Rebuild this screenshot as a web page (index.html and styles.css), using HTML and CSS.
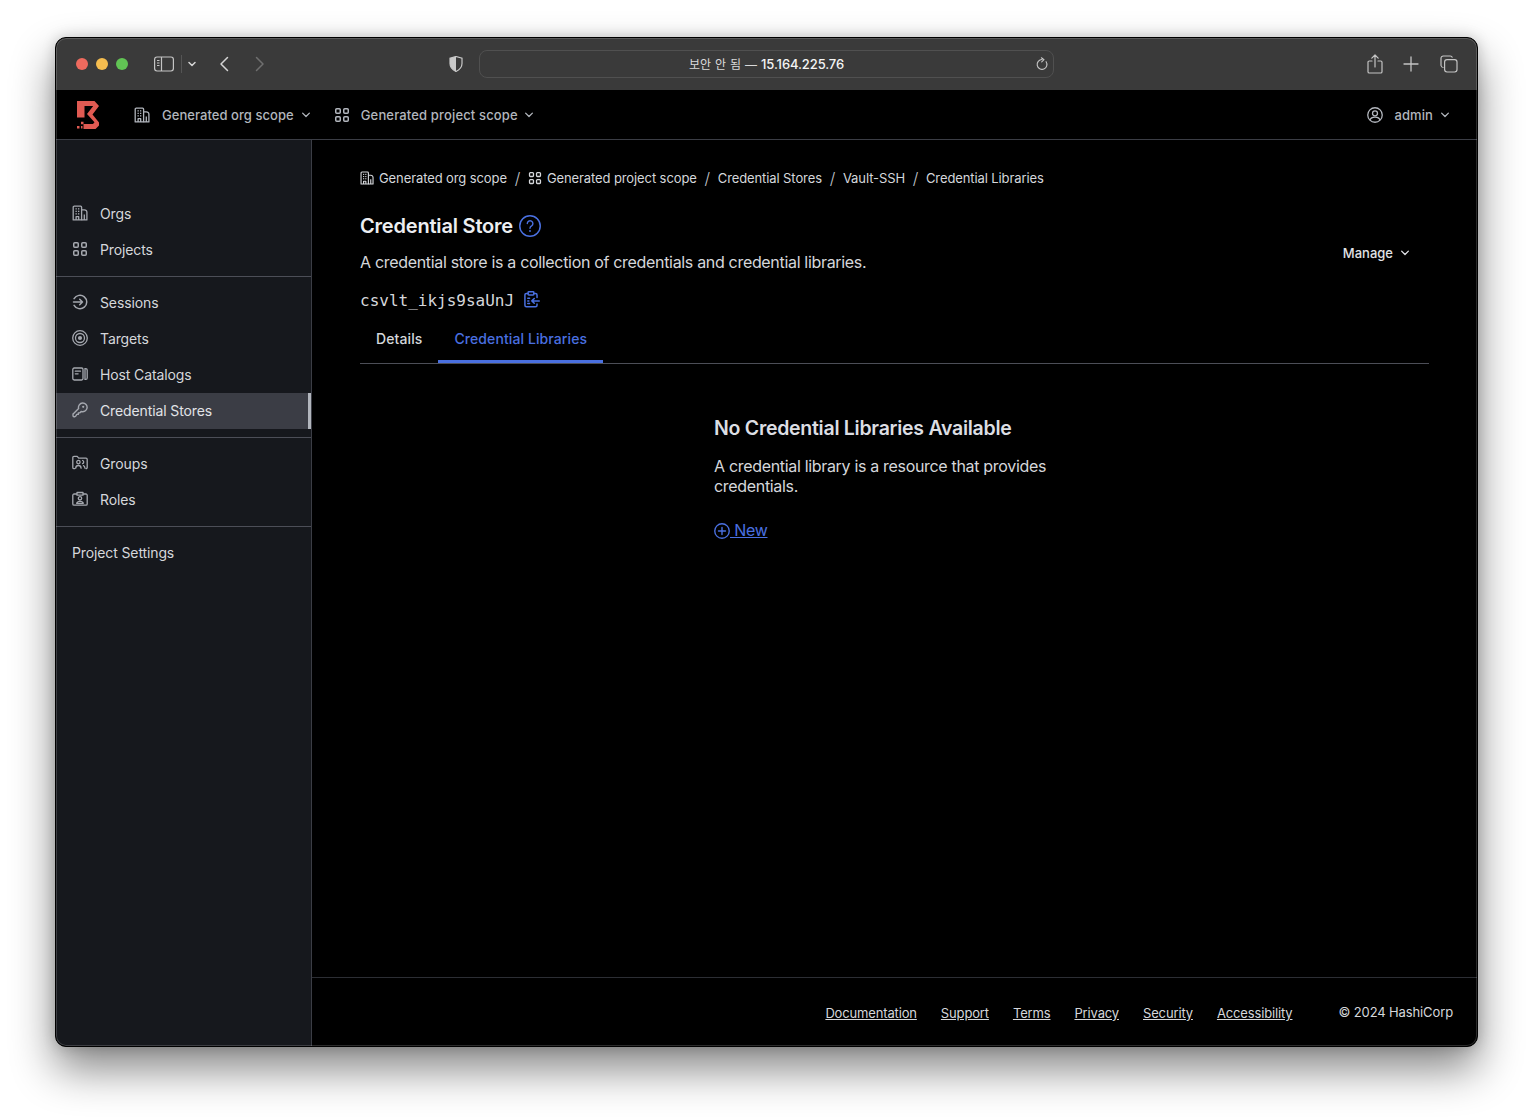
FILE: index.html
```html
<!DOCTYPE html>
<html lang="en">
<head>
<meta charset="utf-8">
<title>Credential Libraries</title>
<link rel="stylesheet" href="styles.css">
</head>
<body>
<svg class="sprite" aria-hidden="true">
  <symbol id="i-org" viewBox="0 0 16 16"><g fill="none" stroke="currentColor" stroke-width="1.300" stroke-linejoin="round"><path d="M1.200 14.900V2.200a1 1 0 0 1 1-1h6.400a1 1 0 0 1 1 1v12.700H1.200z"/><path d="M4.100 14.900v-3.200h2.600v3.200"/><path d="M9.600 4.800h2.800a2.500 2.500 0 0 1 2.500 2.500v7.600H9.600"/><path d="M12.300 14.900V9.500"/></g><g fill="currentColor"><rect x="3.500" y="3.200" width="1.300" height="1.300"/><rect x="6" y="3.200" width="1.300" height="1.300"/><rect x="3.500" y="5.700" width="1.300" height="1.300"/><rect x="6" y="5.700" width="1.300" height="1.300"/><rect x="3.500" y="8.200" width="1.300" height="1.300"/><rect x="6" y="8.200" width="1.300" height="1.300"/></g></symbol>
  <symbol id="i-grid" viewBox="0 0 16 16"><g fill="none" stroke="currentColor" stroke-width="1.500"><rect x="1.750" y="1.750" width="4.500" height="4.500" rx="1"/><rect x="9.750" y="1.750" width="4.500" height="4.500" rx="1"/><rect x="1.750" y="9.750" width="4.500" height="4.500" rx="1"/><rect x="9.750" y="9.750" width="4.500" height="4.500" rx="1"/></g></symbol>
  <symbol id="i-chev" viewBox="0 0 16 16"><path d="M3.500 5.500 8 10l4.500-4.500" fill="none" stroke="currentColor" stroke-width="1.700" stroke-linecap="round" stroke-linejoin="round"/></symbol>
  <symbol id="i-user" viewBox="0 0 16 16"><g fill="none" stroke="currentColor" stroke-width="1.300"><circle cx="8" cy="8" r="7.250"/><circle cx="8" cy="6.300" r="2.500"/><path d="M2.900 13.100c.6-2 2.300-3 5.100-3s4.500 1 5.100 3"/></g></symbol>
  <symbol id="i-sessions" viewBox="0 0 16 16"><g fill="none" stroke="currentColor" stroke-width="1.500" stroke-linecap="round" stroke-linejoin="round"><path d="M2.100 4.700A6.750 6.750 0 1 1 2.100 11.300"/><path d="M1.500 8h9M7.700 5.200 10.500 8l-2.800 2.800"/></g></symbol>
  <symbol id="i-target" viewBox="0 0 16 16"><g fill="none" stroke="currentColor" stroke-width="1.300"><circle cx="8" cy="8" r="7.300"/><circle cx="8" cy="8" r="4.500"/></g><circle cx="8" cy="8" r="2.100" fill="currentColor"/></symbol>
  <symbol id="i-host" viewBox="0 0 16 16"><g fill="none" stroke="currentColor" stroke-width="1.300" stroke-linecap="round"><rect x=".8" y="2" width="10.200" height="12" rx="1.400"/><path d="M3.300 5.200h5.200M3.300 7.800h2.800"/><path d="M13 2.600h.7c.9 0 1.500.6 1.500 1.500v7.800c0 .9-.6 1.500-1.500 1.500H13z"/></g></symbol>
  <symbol id="i-key" viewBox="0 0 16 16"><path d="M10.600 1a4.400 4.400 0 1 1-1.500 8.500l-1.400 1.400H6.300v1.500H4.800l-1.100 1.800c-.2.300-.5.500-.9.500H2a1 1 0 0 1-1-1v-1.100c0-.4.100-.7.400-.9l5.200-5.200A4.400 4.400 0 0 1 10.600 1z" fill="none" stroke="currentColor" stroke-width="1.400" stroke-linejoin="round"/><circle cx="11.200" cy="4.800" r="1.100" fill="currentColor"/></symbol>
  <symbol id="i-groups" viewBox="0 0 16 16"><g fill="none" stroke="currentColor" stroke-width="1.300" stroke-linecap="round" stroke-linejoin="round"><path d="M2.800 13.600H2A1.200 1.200 0 0 1 .8 12.400V2.600A1.200 1.200 0 0 1 2 1.400h3.200l1.500 1.800h7.300a1.200 1.200 0 0 1 1.200 1.200v8a1.200 1.200 0 0 1-1.200 1.200"/><circle cx="6.400" cy="7.100" r="1.700"/><path d="M3.700 13.200c.1-1.700 1.100-2.700 2.700-2.700s2.600 1 2.700 2.700"/><path d="M10.600 5.500a1.700 1.700 0 0 1 0 3.200M11.500 10.600c.9.400 1.400 1.300 1.500 2.600"/></g></symbol>
  <symbol id="i-roles" viewBox="0 0 16 16"><g fill="none" stroke="currentColor" stroke-width="1.300" stroke-linejoin="round"><path d="M5 3H2.100A1.300 1.300 0 0 0 .8 4.300v8.600c0 .7.600 1.300 1.300 1.300h11.800c.7 0 1.300-.6 1.300-1.300V4.300c0-.7-.6-1.300-1.300-1.300H11"/><path d="M5 4.200V1.500h6v2.700z"/><circle cx="8" cy="7.300" r="1.700"/><path d="M4.700 12.400c.2-1.300 1.300-2 3.300-2s3.100.7 3.300 2z"/></g></symbol>
  <symbol id="i-copy" viewBox="0 0 16 16"><g fill="none" stroke="currentColor" stroke-width="1.400" stroke-linecap="round" stroke-linejoin="round"><path d="M4.800 2.300H3.200c-.8 0-1.400.6-1.400 1.400v9.800c0 .8.600 1.400 1.400 1.400h8.600c.8 0 1.400-.6 1.400-1.400v-1.300M13.200 6.200V3.700c0-.8-.6-1.400-1.400-1.400h-1.600"/><rect x="4.800" y=".8" width="5.400" height="3" rx=".7"/><path d="M15.300 9.300H8.300M10.600 7l-2.300 2.300 2.300 2.300M4.500 6.800h1.700M4.500 9.300h1M4.500 11.800h1.700"/></g></symbol>
  <symbol id="i-help" viewBox="0 0 22 22"><g fill="none" stroke="currentColor" stroke-linecap="round"><circle cx="11" cy="11" r="10.250" stroke-width="1.500"/><path d="M8.300 8.500a2.800 2.800 0 1 1 4.300 2.400c-1 .6-1.600 1.200-1.600 2.300" stroke-width="1.400"/></g><circle cx="11" cy="16" r=".9" fill="currentColor"/></symbol>
  <symbol id="i-plus" viewBox="0 0 16 16"><g fill="none" stroke="currentColor" stroke-width="1.400" stroke-linecap="round"><circle cx="8" cy="8" r="7.250"/><path d="M8 4.500v7M4.500 8h7"/></g></symbol>
</svg>

<div class="window">
  <div class="titlebar">
    <div class="tb-left">
      <span class="light light-red"></span>
      <span class="light light-yellow"></span>
      <span class="light light-green"></span>
      <svg class="tb-sidebar" viewBox="0 0 20 16" width="20" height="16"><rect x=".6" y="1" width="18.800" height="14" rx="2.400" fill="none" stroke="currentColor" stroke-width="1.200"/><path d="M7.500 1v14" stroke="currentColor" stroke-width="1.200"/><path d="M3 4.500h2.500M3 7h2.500M3 9.500h2.500" stroke="currentColor" stroke-width="1.200"/></svg>
      <span class="tb-div"></span>
      <svg class="tb-down" viewBox="0 0 8 6" width="8" height="6"><path d="M1 1.500l3 3 3-3" fill="none" stroke="currentColor" stroke-width="1.500" stroke-linecap="round" stroke-linejoin="round"/></svg>
      <svg class="tb-back" viewBox="0 0 10 16" width="10" height="16"><path d="M8.500 1.500 2 8l6.500 6.500" fill="none" stroke="currentColor" stroke-width="1.500" stroke-linecap="round" stroke-linejoin="round"/></svg>
      <svg class="tb-forward" viewBox="0 0 10 16" width="10" height="16"><path d="M1.500 1.500 8 8l-6.500 6.500" fill="none" stroke="currentColor" stroke-width="1.500" stroke-linecap="round" stroke-linejoin="round"/></svg>
    </div>
    <svg class="tb-shield" viewBox="0 0 14 16" width="14" height="16"><path d="M7 .5 13 2.300v5.300c0 3.800-2.600 6.300-6 7.900-3.400-1.600-6-4.100-6-7.900V2.300z" fill="none" stroke="currentColor" stroke-width="1.200"/><path d="M7 .5v15c-3.400-1.600-6-4.100-6-7.900V2.300z" fill="currentColor"/></svg>
    <div class="addr">
      <span class="addr-text"><span class="addr-ko">보안 안 됨 — </span>15.164.225.76</span>
      <svg class="addr-reload" viewBox="0 0 12 14" width="12" height="14"><path d="M8.300 3.100a4.900 4.900 0 1 1-4.600 0" fill="none" stroke="currentColor" stroke-width="1.100" stroke-linecap="round" transform="rotate(28 6 7.500)"/><path d="M5.400.8 8 2.700 5.700 4.800" fill="none" stroke="currentColor" stroke-width="1.100" stroke-linecap="round" stroke-linejoin="round"/></svg>
    </div>
    <div class="tb-right">
      <svg viewBox="0 0 16 20" width="16" height="20"><path d="M5 7H2.300C1.600 7 1 7.600 1 8.300v9.400c0 .7.600 1.300 1.300 1.300h11.400c.7 0 1.300-.6 1.300-1.300V8.300C15 7.600 14.400 7 13.700 7H11M8 13V1.200M4.800 4.200 8 1l3.200 3.200" fill="none" stroke="currentColor" stroke-width="1.200" stroke-linecap="round" stroke-linejoin="round"/></svg>
      <svg viewBox="0 0 16 16" width="16" height="16"><path d="M8 1v14M1 8h14" fill="none" stroke="currentColor" stroke-width="1.300" stroke-linecap="round"/></svg>
      <svg class="tb-tabs" viewBox="0 0 18 18" width="18" height="18"><path d="M3.500 12.500A2.500 2.500 0 0 1 1 10.500V3.300C1 2 2 1 3.300 1h6.900c1 0 1.900.7 2.200 1.700" fill="none" stroke="currentColor" stroke-width="1.200"/><rect x="4.600" y="4.600" width="12.400" height="12.400" rx="2.400" fill="none" stroke="currentColor" stroke-width="1.200"/></svg>
    </div>
  </div>

  <header class="topbar">
    <svg class="logo" viewBox="0 0 24 29" width="24" height="29"><path fill="#e05a52" d="M1 1h17.500L23 6l-6.500 8.500L23 22.500v3L19.500 29H7.500v-5h9.500l1.500-1.800L11 14l6.200-8H8.500v11.500H1z"/><path fill="#e05a52" d="M5 21.800h2.500v2.500H5zM1 26h2.500v2.500H1zM5 26h1.500v2.500H5z"/></svg>
    <a class="scope scope-org"><svg class="ic"><use href="#i-org"/></svg><span>Generated org scope</span><svg class="chev"><use href="#i-chev"/></svg></a>
    <a class="scope scope-project"><svg class="ic"><use href="#i-grid"/></svg><span>Generated project scope</span><svg class="chev"><use href="#i-chev"/></svg></a>
    <a class="scope scope-user"><svg class="ic"><use href="#i-user"/></svg><span>admin</span><svg class="chev"><use href="#i-chev"/></svg></a>
  </header>

  <div class="body">
    <nav class="sidebar">
      <div class="nav-group nav-first">
        <a class="nav-item"><svg class="ic"><use href="#i-org"/></svg>Orgs</a>
        <a class="nav-item"><svg class="ic"><use href="#i-grid"/></svg>Projects</a>
      </div>
      <div class="nav-group">
        <a class="nav-item"><svg class="ic"><use href="#i-sessions"/></svg>Sessions</a>
        <a class="nav-item"><svg class="ic"><use href="#i-target"/></svg>Targets</a>
        <a class="nav-item"><svg class="ic"><use href="#i-host"/></svg>Host Catalogs</a>
        <a class="nav-item nav-active"><svg class="ic"><use href="#i-key"/></svg>Credential Stores</a>
      </div>
      <div class="nav-group">
        <a class="nav-item"><svg class="ic"><use href="#i-groups"/></svg>Groups</a>
        <a class="nav-item"><svg class="ic"><use href="#i-roles"/></svg>Roles</a>
      </div>
      <div class="nav-group nav-last">
        <a class="nav-item">Project Settings</a>
      </div>
    </nav>

    <main class="main">
      <div class="content">
        <ol class="crumbs">
          <li><svg class="crumb-ic"><use href="#i-org"/></svg>Generated org scope</li>
          <li class="sep">/</li>
          <li><svg class="crumb-ic"><use href="#i-grid"/></svg>Generated project scope</li>
          <li class="sep">/</li>
          <li>Credential Stores</li>
          <li class="sep">/</li>
          <li>Vault-SSH</li>
          <li class="sep">/</li>
          <li>Credential Libraries</li>
        </ol>

        <div class="page-head">
          <div>
            <h1 class="title">Credential Store <svg class="help"><use href="#i-help"/></svg></h1>
            <p class="lead">A credential store is a collection of credentials and credential libraries.</p>
            <div class="ident"><code>csvlt_ikjs9saUnJ</code><svg class="copy"><use href="#i-copy"/></svg></div>
          </div>
          <a class="manage">Manage<svg class="chev"><use href="#i-chev"/></svg></a>
        </div>

        <div class="tabs">
          <a class="tab">Details</a>
          <a class="tab tab-active">Credential Libraries</a>
        </div>

        <section class="empty">
          <h2>No Credential Libraries Available</h2>
          <p>A credential library is a resource that provides credentials.</p>
          <a class="new"><svg class="new-ic"><use href="#i-plus"/></svg> New</a>
        </section>
      </div>

      <footer class="footer">
        <div class="foot-links">
          <a>Documentation</a>
          <a>Support</a>
          <a>Terms</a>
          <a>Privacy</a>
          <a>Security</a>
          <a>Accessibility</a>
        </div>
        <span class="copyright">© 2024 HashiCorp</span>
      </footer>
    </main>
  </div>
</div>
</body>
</html>
```

FILE: styles.css
```css
* { box-sizing: border-box; }
html, body { margin: 0; height: 100%; }
body {
  background: #fff;
  padding: 37px 55px 0;
  font-family: Inter, "Noto Sans CJK KR", sans-serif;
  overflow: hidden;
}
.sprite { width: 0; height: 0; display: block; }
a { color: inherit; text-decoration: none; }

.window {
  position: relative;
  width: 1423px;
  height: 1010px;
  border: 1px solid #000;
  border-radius: 11px;
  overflow: hidden;
  display: flex;
  flex-direction: column;
  box-shadow: 0 22px 44px rgba(0, 0, 0, .48), 0 0 14px rgba(0, 0, 0, .18);
  background: #000;
}
.window::after {
  content: "";
  position: absolute;
  inset: 0;
  border-radius: 10px;
  box-shadow: inset 0 0 0 1px rgba(255, 255, 255, .17);
  pointer-events: none;
}

/* Browser chrome */
.titlebar {
  flex: 0 0 52px;
  display: flex;
  align-items: center;
  background: #3a3a3a;
  color: #c4c4c4;
}
.tb-left { width: 393px; display: flex; align-items: center; padding-left: 20px; flex: none; }
.light { width: 12px; height: 12px; border-radius: 50%; margin-right: 8px; }
.light-red { background: #ee6a5e; }
.light-yellow { background: #f5bd4f; }
.light-green { background: #61c454; }
.tb-sidebar { margin-left: 18px; }
.tb-div { width: 1px; height: 18px; background: #555; margin-left: 7px; }
.tb-down { margin-left: 6px; color: #d4d4d4; }
.tb-back { margin-left: 23px; color: #d4d4d4; }
.tb-forward { margin-left: 26px; color: #6f6f6f; }
.tb-shield { flex: none; margin-right: 16px; color: #c9c9c9; }
.addr {
  width: 575px;
  height: 28px;
  flex: none;
  position: relative;
  display: flex;
  align-items: center;
  justify-content: center;
  border: 1px solid #505050;
  border-radius: 8px;
}
.addr-text { font-size: 13px; font-weight: 500; color: #f4f4f4; letter-spacing: -.1px; padding: 0 0 2px; }
.addr-ko { font-size: 12px; color: #d9d9d9; font-weight: 400; letter-spacing: 0; word-spacing: .6px; }
.addr-reload { position: absolute; right: 5px; top: 6px; color: #c8c8c8; }
.tb-right { margin-left: 313px; display: flex; align-items: center; gap: 20px; }
.tb-tabs { margin-left: 1px; }

/* App header */
.topbar {
  flex: 0 0 50px;
  display: flex;
  align-items: center;
  background: #000;
  border-bottom: 1px solid #3b3d45;
  color: #b2b6bd;
  padding-left: 20px;
}
.logo { flex: none; margin-top: -1px; }
.ic { width: 16px; height: 16px; flex: none; }
.chev { width: 12px; height: 12px; flex: none; }
.scope { display: flex; align-items: center; font-size: 13px; font-weight: 500; letter-spacing: .15px; }
.scope-org { margin-left: 34px; letter-spacing: .05px; }
.scope-org .ic { margin-right: 12px; }
.scope-user .ic { margin-right: 11px; }
.scope-org .chev { margin-left: 6px; }
.scope-project { margin-left: 22px; }
.scope-project .ic { margin-right: 11px; }
.scope-project .chev { margin-left: 5px; }
.scope-user { margin-left: auto; padding-right: 26px; letter-spacing: .1px; }
.scope-user .chev { margin-left: 6px; }

/* Layout */
.body { flex: 1; display: flex; min-height: 0; }
.sidebar {
  flex: 0 0 256px;
  background: #16181d;
  border-right: 1px solid #3b3d45;
  color: #d5d7db;
}
.nav-group { padding: 8px 0; border-bottom: 1px solid #4c4e57; }
.nav-first { padding-top: 56px; }
.nav-last { border-bottom: 0; }
.nav-item {
  height: 36px;
  display: flex;
  align-items: center;
  gap: 12px;
  padding: 0 0 1px 16px;
  font-size: 14px;
  letter-spacing: -.12px;
}
.nav-item .ic { color: #a5a8af; margin-bottom: 1px; }
.nav-active { background: #3b3d45; border-right: 3px solid #b2b6bd; color: #e1e3e7; }

.main { flex: 1; min-width: 0; display: flex; flex-direction: column; background: #000; color: #d5d7db; }
.content { flex: 1; padding: 28px 48px 0; }

.crumbs {
  list-style: none;
  margin: 0;
  padding: 0;
  height: 20px;
  display: flex;
  align-items: center;
  gap: 7.75px;
  font-size: 13px;
  letter-spacing: -.1px;
  color: #d5d7db;
}
.crumbs li { display: flex; align-items: center; }
.crumb-ic { width: 14px; height: 14px; margin-right: 5px; }
.sep { font-size: 16px; font-weight: 300; color: #c2c5cb; }

.page-head { display: flex; justify-content: space-between; align-items: center; margin-top: 26px; }
.title {
  margin: 0;
  height: 24px;
  display: flex;
  align-items: center;
  gap: 6px;
  font-size: 20px;
  line-height: 24px;
  font-weight: 600;
  letter-spacing: -.19px;
  color: #eceef1;
}
.help { width: 22px; height: 22px; color: #4a70e0; }
.lead { margin: 14px 0 0; font-size: 16px; line-height: 20px; letter-spacing: -.32px; color: #d5d7db; }
.ident { margin-top: 16px; height: 24px; display: flex; align-items: center; gap: 9px; }
.ident code { font-family: "DejaVu Sans Mono", monospace; font-size: 16px; color: #d5d7db; }
.copy { width: 17px; height: 17px; color: #4a70e0; margin-top: -2px; }
.manage {
  display: flex;
  align-items: center;
  gap: 6px;
  padding-right: 18px;
  font-size: 13px;
  font-weight: 500;
  color: #e1e3e7;
  margin-top: -20px;
}

.tabs { margin-top: 3px; display: flex; border-bottom: 1px solid #4c4e57; height: 49px; }
.tab {
  height: 48px;
  padding: 0 16px 2px;
  display: flex;
  align-items: center;
  font-size: 14px;
  font-weight: 500;
  letter-spacing: .1px;
  color: #d5d7db;
}
.tab-active { color: #4a70e0; box-shadow: inset 0 -3px 0 #4a70e0; }

.empty { width: 361px; margin: 52px auto 0; }
.empty h2 { margin: 0; font-size: 19.5px; line-height: 24px; font-weight: 600; letter-spacing: -.27px; color: #dcdee3; }
.empty p { margin: 16px 0 0; font-size: 16px; line-height: 20px; letter-spacing: -.32px; color: #d5d7db; }
.new { display: inline-block; margin-top: 24px; font-size: 16px; line-height: 20px; letter-spacing: -.3px; color: #4a70e0; text-decoration: underline; }
.new-ic { width: 16px; height: 16px; vertical-align: -3px; }

.footer {
  flex: 0 0 69px;
  border-top: 1px solid #2c2e34;
  display: flex;
  justify-content: flex-end;
  align-items: center;
  gap: 46px;
  padding: 0 24px 0 0;
  font-size: 13px;
  color: #d5d7db;
}
.foot-links { display: flex; gap: 24px; margin-top: 2px; letter-spacing: -.15px; }
.foot-links a { text-decoration: underline; }
.copyright { color: #d5d7db; letter-spacing: -.12px; }
```
